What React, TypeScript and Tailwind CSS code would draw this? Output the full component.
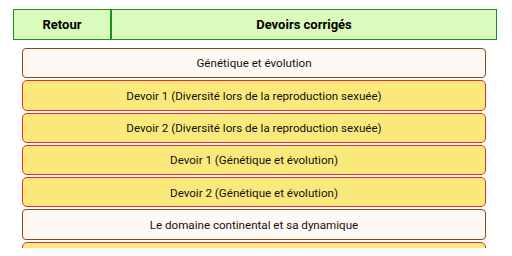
import React from "react";

const items: { label: string; kind: "section" | "devoir" }[] = [
  { label: "Génétique et évolution", kind: "section" },
  { label: "Devoir 1 (Diversité lors de la reproduction sexuée)", kind: "devoir" },
  { label: "Devoir 2 (Diversité lors de la reproduction sexuée)", kind: "devoir" },
  { label: "Devoir 1 (Génétique et évolution)", kind: "devoir" },
  { label: "Devoir 2 (Génétique et évolution)", kind: "devoir" },
  { label: "Le domaine continental et sa dynamique", kind: "section" },
  { label: "Devoir 1 (Le domaine continental et sa dynamique)", kind: "devoir" },
];

export default function App() {
  return (
    <div
      className="w-[512px] h-[256px] overflow-hidden bg-white"
      style={{ fontFamily: "Roboto, 'Liberation Sans', sans-serif" }}
    >
      <div className="pt-[9px] pl-[13px] pr-[15px]">
        <div className="flex h-[31px] border border-[#1f8f1f] bg-[#d9fcbc]">
          <div className="w-[96px] flex items-center justify-center text-[13px] font-bold text-black">
            Retour
          </div>
          <div className="w-[2px] bg-[#1f8f1f]" />
          <div className="flex-1 flex items-center justify-center text-[13px] font-bold text-black">
            Devoirs corrigés
          </div>
        </div>
      </div>
      <div className="h-[208px] overflow-hidden">
        <div className="flex flex-col gap-[2px] pt-[8px] pl-[22px] pr-[26px]">
          {items.map((it, i) =>
            it.kind === "section" ? (
              <div
                key={i}
                className="h-[30.3px] shrink-0 flex items-center justify-center pt-[2px] rounded-[4px] border-[1.5px] border-[#8b4513] bg-[#fff9f4] text-[11.6px] text-[#111]"
              >
                {it.label}
              </div>
            ) : (
              <div
                key={i}
                className="h-[30.3px] shrink-0 flex items-center justify-center pt-[2px] rounded-[5px] border-[1.5px] border-[#e52a2a] bg-[#fce97c] text-[11.6px] text-[#111]"
              >
                {it.label}
              </div>
            )
          )}
        </div>
      </div>
    </div>
  );
}
